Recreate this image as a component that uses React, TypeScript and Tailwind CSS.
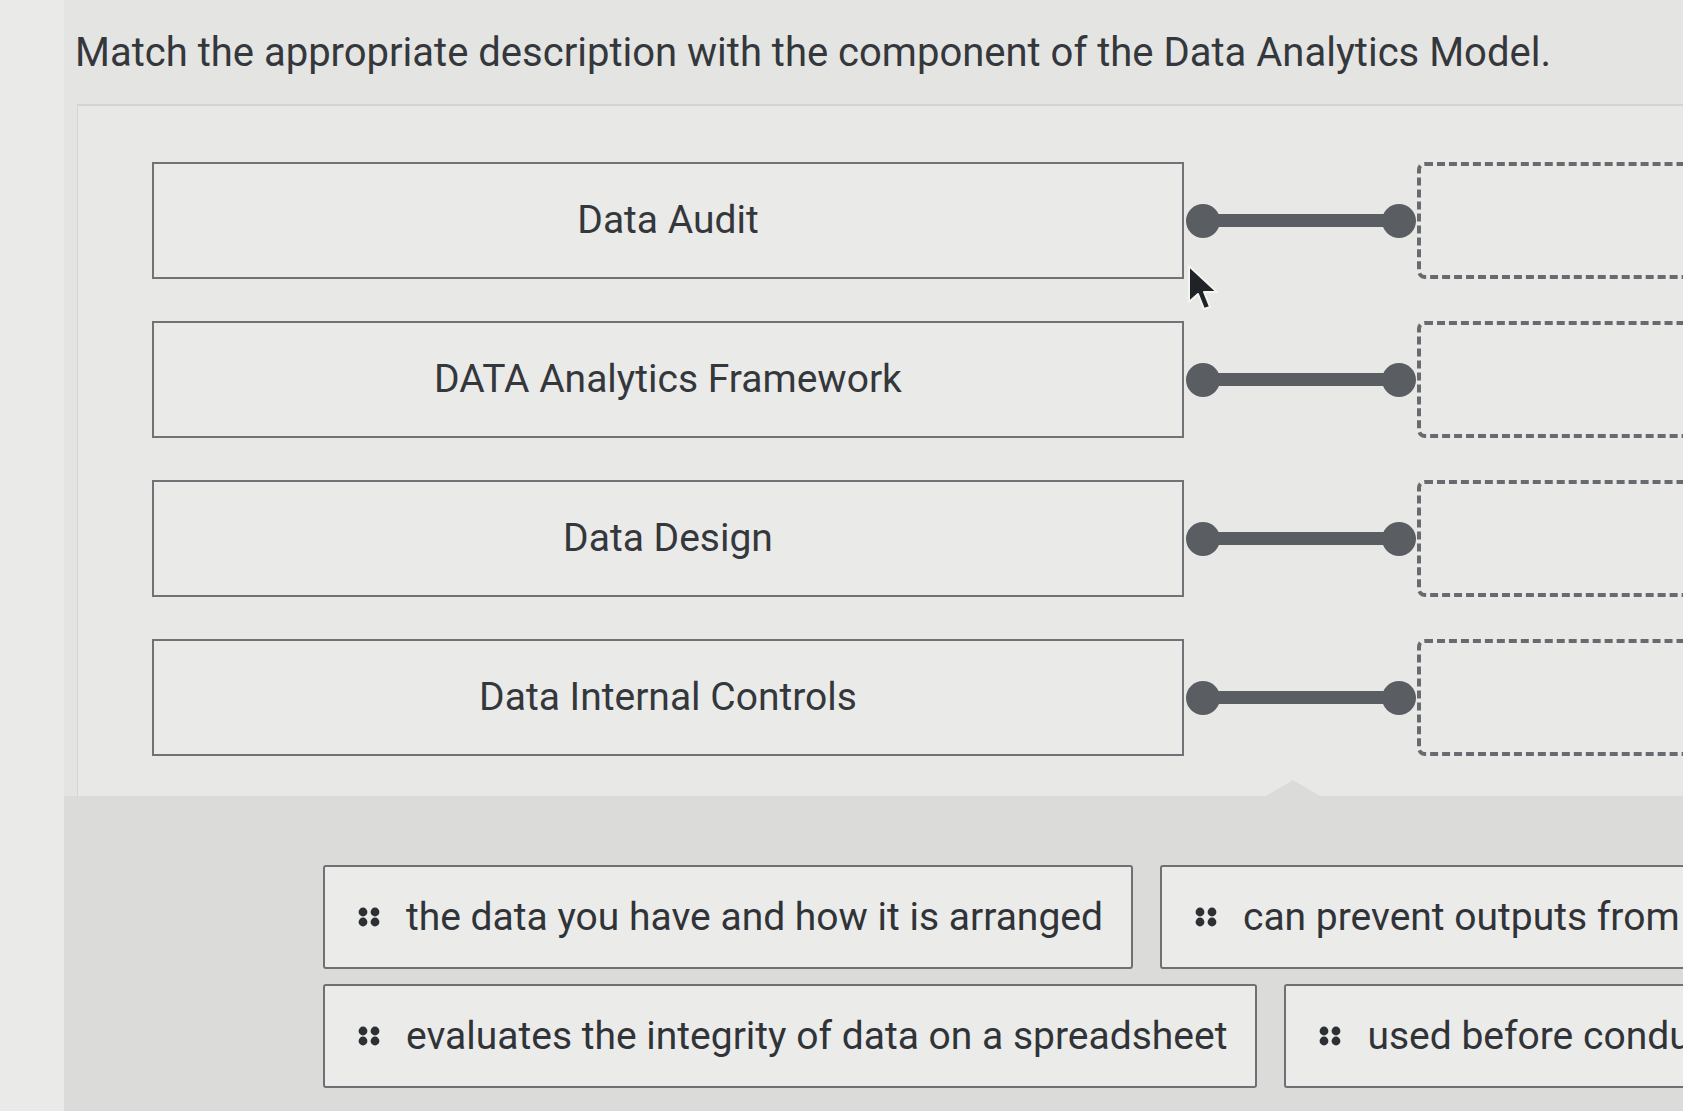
const TERMS = ["Data Audit", "DATA Analytics Framework", "Data Design", "Data Internal Controls"];

const OPTION_ROWS = [
  ["the data you have and how it is arranged", "can prevent outputs from being manipulated"],
  ["evaluates the integrity of data on a spreadsheet", "used before conducting analysis"],
];

function DragHandle() {
  return (
    <svg width="22" height="20" viewBox="0 0 22 20" className="shrink-0">
      <circle cx="5" cy="5" r="4.4" fill="#2c2f33" />
      <circle cx="17" cy="5" r="4.4" fill="#2c2f33" />
      <circle cx="5" cy="15" r="4.4" fill="#2c2f33" />
      <circle cx="17" cy="15" r="4.4" fill="#2c2f33" />
    </svg>
  );
}

function Connector() {
  return (
    <div className="flex w-[233px] shrink-0 items-center pl-[2px] pr-[1px]">
      <div className="h-[34px] w-[34px] shrink-0 rounded-full bg-[#5a5e62]" />
      <div className="-mx-[6px] h-[13px] flex-1 bg-[#5a5e62]" />
      <div className="h-[34px] w-[34px] shrink-0 rounded-full bg-[#5a5e62]" />
    </div>
  );
}

function OptionChip({ text }: { text: string }) {
  return (
    <div className="flex h-[104px] shrink-0 items-center gap-[26px] rounded-[3px] border-2 border-[#6e7073] bg-[#ebebe9] pl-[33px] pr-[28px]">
      <DragHandle />
      <span className="whitespace-nowrap text-[39px] text-[#303337]">{text}</span>
    </div>
  );
}

export default function App() {
  return (
    <div
      className="relative h-[1111px] w-[1683px] overflow-hidden bg-[#e4e4e2]"
      style={{ fontFamily: "Roboto, 'Liberation Sans', sans-serif" }}
    >
      <div className="flex h-full">
        <div className="w-[64px] shrink-0 bg-[#eaeae8]" />
        <div className="flex min-w-0 flex-1 flex-col">
          <h1 className="pl-[11px] pt-[25px] text-[40px] leading-[56px] font-normal text-[#34373b]">
            Match the appropriate description with the component of the Data Analytics Model.
          </h1>

          <div className="ml-[13px] mt-[23px] flex flex-1 flex-col border-t-2 border-l border-[#d4d4d2] bg-[#e8e8e6]">
            <div className="flex flex-col gap-[42px] pl-[74px] pt-[56px] pb-[40px]">
              {TERMS.map((term) => (
                <div key={term} className="flex h-[117px] items-stretch">
                  <div className="flex w-[1032px] shrink-0 items-center justify-center border-2 border-[#707275] bg-[#eaeae8]">
                    <span className="text-[39px] text-[#34373b]">{term}</span>
                  </div>
                  <Connector />
                  <div className="w-[400px] shrink-0 rounded-lg border-4 border-dashed border-[#676a6e] bg-[#e9e9e7]" />
                </div>
              ))}
            </div>

            <div className="relative -ml-[14px] flex flex-1 flex-col gap-[15px] bg-[#dbdbd9] pl-[259px] pt-[69px]">
              <div className="absolute -top-[16px] left-[1202px] h-0 w-0 border-x-[27px] border-b-[16px] border-x-transparent border-b-[#dbdbd9]" />
              {OPTION_ROWS.map((row, i) => (
                <div key={i} className="flex gap-[27px]">
                  {row.map((opt) => (
                    <OptionChip key={opt} text={opt} />
                  ))}
                </div>
              ))}
            </div>
          </div>
        </div>
      </div>

      <svg
        className="absolute left-[1187px] top-[264px]"
        width="34"
        height="50"
        viewBox="0 0 34 50"
      >
        <path
          d="M2 2 L2 38 L11 30 L17 45 L23 43 L17 28 L30 28 Z"
          fill="#1f2328"
          stroke="#f4f4f2"
          strokeWidth="2"
          strokeLinejoin="round"
        />
      </svg>
    </div>
  );
}
